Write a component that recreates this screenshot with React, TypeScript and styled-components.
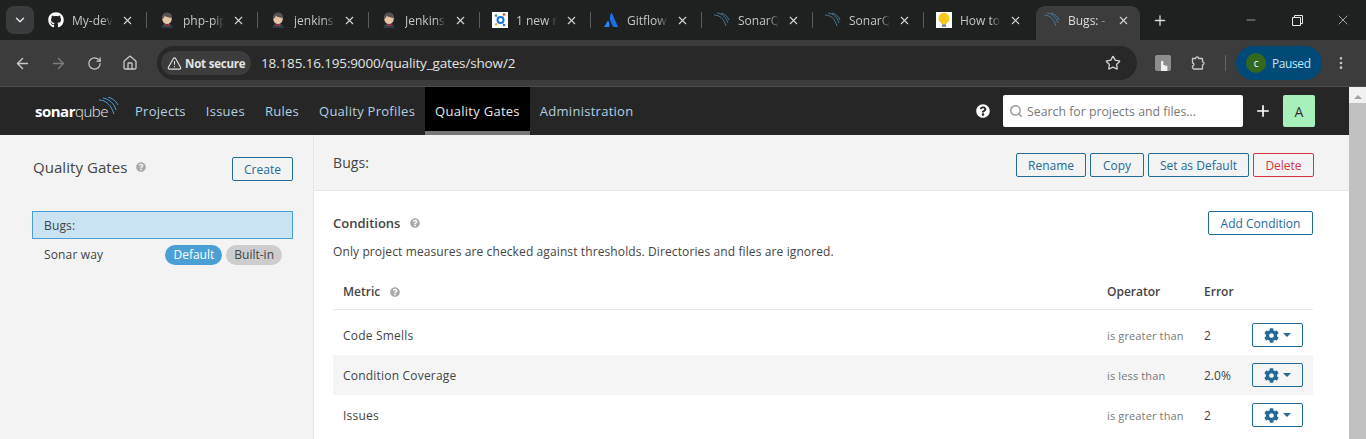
import React from 'react';
import styled, { createGlobalStyle } from 'styled-components';
import { FaGithub, FaCog, FaQuestionCircle } from 'react-icons/fa';
import { ArrowLeft, ArrowRight, RotateCw, Home, TriangleAlert, Star, X, Plus, ChevronDown, Minus, MoreVertical, Search } from 'lucide-react';

const Global = createGlobalStyle`
  html, body { margin: 0; padding: 0; height: 439px; overflow: hidden; background: #fff; }
  * { box-sizing: border-box; }
  body { font-family: "Open Sans", "Noto Sans", sans-serif; color: #444; }
`;

const Page = styled.div`width: 1366px; height: 439px; overflow: hidden; display: flex; flex-direction: column;`;

const TabStrip = styled.div`height: 40px; background: #1f2120; display: flex; align-items: flex-end; padding-left: 6px; flex: none;`;
const TabMenu = styled.div`width: 28px; height: 28px; border-radius: 8px; background: #3a3b3c; display: flex; align-items: center; justify-content: center; color: #e3e3e3; margin: 0 2px 6px 0;`;
const Tab = styled.div<{ $active?: boolean; $sep?: boolean }>`
  width: 111px; height: 34px; padding: 0 0 6px ${p => (p.$active ? 8 : 12)}px;
  display: flex; align-items: center; gap: 8px; position: relative; flex: none;
  font-family: "Open Sans", sans-serif; font-size: 12px; color: #c4c7c5;
  ${p => p.$active ? `
    background: #3c3c3c; border-radius: 9px 9px 0 0; width: 104px; margin-left: 1px; color: #dcdcdc;
  ` : ''}
  ${p => p.$sep ? `&::after { content: ''; position: absolute; right: 0; top: 6px; width: 1px; height: 16px; background: #5a5c5b; }` : ''}
`;
const Favicon = styled.span`width: 16px; height: 16px; flex: none; display: flex; align-items: center; justify-content: center; color: #fff;`;
const TabTitle = styled.span`
  width: 41px; flex: none; white-space: nowrap;
  -webkit-mask-image: linear-gradient(90deg, #000 75%, transparent);
  mask-image: linear-gradient(90deg, #000 75%, transparent);
`;
const TabClose = styled.span`display: flex; color: #d6d6d6; flex: none;`;
const NewTab = styled.div`margin: 0 0 6px 12px; color: #d8d8d8; display: flex; width: 16px; height: 28px; align-items: center;`;
const WinControls = styled.div`margin-left: auto; display: flex; align-self: stretch; color: #e6e6e6;`;
const WinBtn = styled.div`width: 46px; height: 40px; display: flex; align-items: center; justify-content: center;`;

const Toolbar = styled.div`height: 47px; background: #3c3c3c; border-bottom: 1px solid #4d4d4d; display: flex; align-items: center; padding: 0 0 0 13px; flex: none; color: #c7c7c7;`;
const ToolIcon = styled.span<{ $dim?: boolean }>`width: 18px; margin-right: 18px; display: flex; justify-content: center; color: ${p => (p.$dim ? '#7b7b7b' : '#c7c7c7')};`;
const Omnibox = styled.div`width: 980px; height: 34px; border-radius: 17px; background: #282828; display: flex; align-items: center; padding: 0 16px 0 4px;`;
const SecurityChip = styled.div`height: 24px; width: 90px; border-radius: 12px; background: #3c3c3c; color: #e3e3e3; font-size: 11.5px; font-weight: 700; display: flex; align-items: center; gap: 3px; padding-left: 6px; letter-spacing: -0.2px;`;
const Url = styled.div`margin-left: 10px; color: #e3e3e3; font-size: 13.5px; letter-spacing: -0.15px; flex: 1;`;
const ExtIcon = styled.div`width: 16px; height: 16px; margin-left: 18px; background: #8d8d8d; border-radius: 2px; display: flex; align-items: flex-end; justify-content: center; overflow: hidden;`;
const PuzzleWrap = styled.span`margin-left: 20px; display: flex;`;
const ToolSep = styled.span`width: 1px; height: 16px; background: #666; margin: 0 10px 0 18px;`;
const Profile = styled.div`width: 86px; height: 34px; border-radius: 17px; background: #004a77; color: #c2e7ff; font-size: 12px; letter-spacing: -0.4px; display: flex; align-items: center; gap: 6px; padding-left: 10px;`;
const Avatar = styled.span`width: 20px; height: 20px; border-radius: 50%; background: #33691e; color: #fff; font-size: 10px; display: flex; align-items: center; justify-content: center;`;
const MoreWrap = styled.span`margin-left: 11px; display: flex; color: #c7c7c7;`;

const Viewport = styled.div`flex: 1; display: flex; min-height: 0;`;
const Content = styled.div`flex: 1; min-width: 0; display: flex; flex-direction: column;`;
const Scrollbar = styled.div`width: 17px; background: #f1f1f1; flex: none; display: flex; flex-direction: column; align-items: center; padding-top: 8px;`;
const ScrollUp = styled.div`width: 0; height: 0; border-left: 4px solid transparent; border-right: 4px solid transparent; border-bottom: 4px solid #a3a3a3;`;
const ScrollThumb = styled.div`width: 100%; flex: 1; margin-top: 4px; background: #c1c1c1;`;

const Nav = styled.nav`height: 48px; background: #262626; display: flex; align-items: stretch; padding-left: 35px; flex: none;`;
const Logo = styled.div`width: 90px; position: relative; display: flex; align-items: center; color: #fff; font-size: 15px; letter-spacing: -0.5px;`;
const LogoBold = styled.b`font-weight: 700;`;
const LogoLight = styled.span`font-weight: 300; color: #e8e8e8;`;
const LogoArc = styled.svg`position: absolute; left: 62px; top: 10px;`;
const NavItem = styled.div<{ $active?: boolean }>`
  padding: 0 10px; display: flex; align-items: center; font-size: 13px; color: ${p => (p.$active ? '#e8e8e8' : '#b5d0e3')};
  letter-spacing: 0.27px;
  ${p => p.$active ? 'background: #000; border-bottom: 4px solid #777; padding-top: 4px;' : ''}
`;
const NavRight = styled.div`margin-left: auto; display: flex; align-items: center; padding-right: 34px; color: #fff;`;
const SearchBox = styled.div`width: 240px; height: 32px; margin-left: 13px; background: #fff; border-radius: 2px; display: flex; align-items: center; gap: 4px; padding-left: 6px; color: #777; font-size: 12.3px;`;
const PlusWrap = styled.span`margin: 0 11px; display: flex;`;
const UserBox = styled.div`width: 32px; height: 32px; background: #a8f0bb; color: #333; display: flex; align-items: center; justify-content: center; font-size: 14px; border-radius: 2px;`;

const Body = styled.div`flex: 1; display: flex; min-height: 0;`;
const Side = styled.aside`width: 314px; flex: none; background: #f3f3f3; border-right: 1px solid #e6e6e6; padding: 22px 20px 0 32px;`;
const SideHead = styled.div`display: flex; align-items: center; justify-content: space-between; height: 24px; padding-left: 1px;`;
const SideTitle = styled.div`font-size: 15px; letter-spacing: 0.05px; color: #444; display: flex; align-items: center; gap: 9px; margin-top: -5px;`;
const HelpDot = styled.span`display: inline-flex; color: #aaa;`;
const Btn = styled.button<{ $danger?: boolean; $w: number }>`
  width: ${p => p.$w}px; height: 24px; padding: 0; background: transparent; border-radius: 2px; font: 12px "Open Sans", sans-serif; flex: none;
  border: 1px solid ${p => (p.$danger ? '#d4333f' : '#236a97')};
  color: ${p => (p.$danger ? '#d4333f' : '#236a97')};
  display: inline-flex; align-items: center; justify-content: center;
`;
const GateList = styled.div`margin-top: 30px;`;
const GateRow = styled.div<{ $sel?: boolean }>`
  display: flex; align-items: center; justify-content: space-between; font-size: 12px; letter-spacing: 0.15px; color: #444;
  padding: 0 11px 0 12px; height: ${p => (p.$sel ? 28 : 31)}px;
  ${p => p.$sel ? 'background: #cae3f2; border: 1px solid #4b9fd5; padding-left: 11px;' : ''}
`;
const Badges = styled.div`display: flex; gap: 4px;`;
const Badge = styled.span<{ $blue?: boolean }>`
  height: 20px; padding: 0 8px; border-radius: 10px; display: flex; align-items: center; font-size: 12px; letter-spacing: 0;
  background: ${p => (p.$blue ? '#4b9fd5' : '#cdcdcd')}; color: ${p => (p.$blue ? '#fff' : '#444')};
`;
const Main = styled.main`flex: 1; min-width: 0; display: flex; flex-direction: column;`;
const MainHead = styled.div`height: 56px; background: #f3f3f3; border-bottom: 1px solid #e6e6e6; display: flex; align-items: center; padding: 5px 35px 0 19px; gap: 4px; flex: none;`;
const MainTitle = styled.div`font-size: 14px; letter-spacing: 0.1px; color: #444; margin-right: auto; margin-top: -5px;`;
const Section = styled.section`padding: 20px 36px 0 19px;`;
const CondHead = styled.div`display: flex; align-items: center; justify-content: space-between; height: 24px;`;
const CondTitle = styled.div`font-size: 13px; font-weight: 600; color: #444; display: flex; align-items: center; gap: 10px;`;
const Note = styled.div`font-size: 12px; letter-spacing: 0.11px; color: #444; margin-top: 7px; line-height: 20px;`;
const Table = styled.div`margin-top: 13px;`;
const RowGrid = styled.div<{ $alt?: boolean }>`
  display: grid; grid-template-columns: 764px 97px 48px 61px; align-items: center; height: 40px; padding-left: 10px;
  background: ${p => (p.$alt ? '#f5f5f5' : 'transparent')}; font-size: 12px; color: #444;
`;
const HeadGrid = styled(RowGrid)`height: 35px; border-bottom: 1px solid #e6e6e6; font-weight: 600; margin-bottom: 5px; padding-bottom: 2px;`;
const HeadHelp = styled.span`display: inline-flex; margin-left: 10px; vertical-align: -1px; color: #aaa;`;
const MetricCell = styled.span`letter-spacing: 0.2px;`;
const OpCell = styled.span`font-size: 11px; letter-spacing: 0.14px; color: #777;`;
const GearBtn = styled.button`
  width: 51px; height: 24px; background: transparent; border: 1px solid #236a97; border-radius: 2px; color: #236a97;
  display: inline-flex; align-items: center; justify-content: center; gap: 4px; padding: 0; justify-self: start;
`;
const Caret = styled.span`width: 0; height: 0; border-left: 4px solid transparent; border-right: 4px solid transparent; border-top: 4px solid #236a97;`;

const Sonar = () => (
  <svg width="16" height="16" viewBox="0 0 16 16" fill="none" stroke="#4a7fa5" strokeWidth="0.9">
    <path d="M0 3c6 0 10 4 12 11" /><path d="M3 1c5 .5 9 4 11 10" /><path d="M7 1c4 1 7 4 8 7" />
  </svg>
);
const Jenkins = () => (
  <svg width="16" height="16" viewBox="0 0 16 16">
    <path d="M2.500 16c0-3.500 2-5 5.500-5s5.500 1.500 5.500 5z" fill="#2f3a4a" />
    <ellipse cx="8" cy="6.500" rx="4.800" ry="5.500" fill="#e6c3a4" />
    <path d="M3 7C2.600 3 5 .5 8 .5s5.400 2.200 5 5.500c-2.500-.2-5.500-1-7.200-2.300C5.300 5.300 4.500 6.500 3 7z" fill="#57524f" />
    <path d="M5.800 11.800l2.200 1.200 2.200-1.200v2.400l-2.200-.8-2.200.8z" fill="#c8322a" />
  </svg>
);
const Knime = () => (
  <svg width="16" height="16" viewBox="0 0 16 16">
    <rect width="16" height="16" fill="#fff" />
    <path d="M4 4l3 2M12 3l-2 3M4 12l3-2M12 13l-2-3" stroke="#b9c4d6" strokeWidth="1" />
    <circle cx="8.500" cy="8" r="3" fill="none" stroke="#1a73e8" strokeWidth="2" />
    <circle cx="4" cy="3.500" r="1.300" fill="#34a853" /><circle cx="12" cy="2.500" r="1.300" fill="#ea4335" />
    <circle cx="4" cy="12.500" r="1.300" fill="#fbbc04" /><circle cx="12" cy="13" r="1.300" fill="#1a73e8" />
  </svg>
);
const Atlassian = () => (
  <svg width="16" height="16" viewBox="0 0 16 16">
    <path d="M5 8.500 1 15h5c.9-2 .6-4.500-1-6.500z" fill="#2684ff" />
    <path d="M8.200 1C6.500 3.800 6.300 7 7.700 9.800L10.300 15H15L9 1.300c-.2-.4-.6-.4-.8-.3z" fill="#1c6fe8" />
  </svg>
);
const Bulb = () => (
  <svg width="16" height="16" viewBox="0 0 16 16">
    <rect width="16" height="16" fill="#fff" />
    <path d="M8 .8a5.400 5.400 0 0 0-3 9.900c.5.400.7 1 .7 1.500h4.600c0-.5.200-1.100.7-1.500A5.400 5.400 0 0 0 8 .8z" fill="#f7c81e" />
    <rect x="5.800" y="12.200" width="4.400" height="2.800" rx=".8" fill="#8a8a8a" />
  </svg>
);
const RestoreIcon = () => (
  <svg width="11" height="11" viewBox="0 0 11 11" fill="none" stroke="#e6e6e6"><path d="M.5 2.500h8v8h-8zM2.500 2.500v-2h8v8h-2" /></svg>
);
const ChromePuzzle = () => (
  <svg width="16" height="16" viewBox="0 0 16 16" fill="none" stroke="#c7c7c7" strokeWidth="1.300" strokeLinejoin="round">
    <path d="M1.500 3.500h3.200a1.500 1.500 0 0 1 3 0h3.800v3.300a1.500 1.500 0 0 1 0 3v4.200H2.700l-1.200-1.200V11a1.500 1.500 0 0 0 0-3z" />
  </svg>
);

const tabs: { icon: React.ReactNode; title: string }[] = [
  { icon: <FaGithub size={16} />, title: 'My-dev' },
  { icon: <Jenkins />, title: 'php-pip' },
  { icon: <Jenkins />, title: 'jenkins' },
  { icon: <Jenkins />, title: 'Jenkins' },
  { icon: <Knime />, title: '1 new n' },
  { icon: <Atlassian />, title: 'Gitflow' },
  { icon: <Sonar />, title: 'SonarQ' },
  { icon: <Sonar />, title: 'SonarQ' },
  { icon: <Bulb />, title: 'How to' },
];

const rows = [
  { m: 'Code Smells', o: 'is greater than', e: '2' },
  { m: 'Condition Coverage', o: 'is less than', e: '2.0%', alt: true },
  { m: 'Issues', o: 'is greater than', e: '2' },
];

export default function App() {
  return (
    <Page>
      <Global />
      <TabStrip>
        <TabMenu><ChevronDown size={14} strokeWidth={2.5} /></TabMenu>
        {tabs.map((t, i) => (
          <Tab key={i} $sep={i < 8}>
            <Favicon>{t.icon}</Favicon>
            <TabTitle>{t.title}</TabTitle>
            <TabClose><X size={13} strokeWidth={2} /></TabClose>
          </Tab>
        ))}
        <Tab $active>
          <Favicon><Sonar /></Favicon>
          <TabTitle>Bugs: -</TabTitle>
          <TabClose><X size={13} strokeWidth={2} /></TabClose>
        </Tab>
        <NewTab><Plus size={17} strokeWidth={2} /></NewTab>
        <WinControls>
          <WinBtn><Minus size={14} strokeWidth={1} /></WinBtn>
          <WinBtn><RestoreIcon /></WinBtn>
          <WinBtn><X size={16} strokeWidth={1} /></WinBtn>
        </WinControls>
      </TabStrip>
      <Toolbar>
        <ToolIcon><ArrowLeft size={17} /></ToolIcon>
        <ToolIcon $dim><ArrowRight size={17} /></ToolIcon>
        <ToolIcon><RotateCw size={15} /></ToolIcon>
        <ToolIcon><Home size={16} /></ToolIcon>
        <Omnibox>
          <SecurityChip><TriangleAlert size={15} strokeWidth={1.8} />Not secure</SecurityChip>
          <Url>18.185.16.195:9000/quality_gates/show/2</Url>
          <Star size={16} color="#d0d0d0" />
        </Omnibox>
        <ExtIcon><svg width="12" height="14" viewBox="0 0 12 14"><path d="M4 14V5a1.200 1.200 0 0 1 2.400 0v3l4 1v5z" fill="#f1f1f1" /></svg></ExtIcon>
        <PuzzleWrap><ChromePuzzle /></PuzzleWrap>
        <ToolSep />
        <Profile><Avatar>c</Avatar>Paused</Profile>
        <MoreWrap><MoreVertical size={16} /></MoreWrap>
      </Toolbar>
      <Viewport>
        <Content>
          <Nav>
            <Logo>
              <LogoBold>sonar</LogoBold><LogoLight>qube</LogoLight>
              <LogoArc width="22" height="20" viewBox="0 0 22 20" fill="none" stroke="#4b9fd5" strokeWidth="1">
                <path d="M2 3c7 0 12 5 15 14" /><path d="M6 1c6 1 11 5 13 12" /><path d="M11 0c4 1 8 4 10 8" />
              </LogoArc>
            </Logo>
            <NavItem>Projects</NavItem>
            <NavItem>Issues</NavItem>
            <NavItem>Rules</NavItem>
            <NavItem>Quality Profiles</NavItem>
            <NavItem $active>Quality Gates</NavItem>
            <NavItem>Administration</NavItem>
            <NavRight>
              <FaQuestionCircle size={14} />
              <SearchBox><Search size={14} color="#999" strokeWidth={2.5} />Search for projects and files...</SearchBox>
              <PlusWrap><Plus size={18} strokeWidth={2.2} /></PlusWrap>
              <UserBox>A</UserBox>
            </NavRight>
          </Nav>
          <Body>
            <Side>
              <SideHead>
                <SideTitle>Quality Gates <HelpDot><FaQuestionCircle size={10} /></HelpDot></SideTitle>
                <Btn $w={61}>Create</Btn>
              </SideHead>
              <GateList>
                <GateRow $sel>Bugs:</GateRow>
                <GateRow>
                  Sonar way
                  <Badges><Badge $blue>Default</Badge><Badge>Built-in</Badge></Badges>
                </GateRow>
              </GateList>
            </Side>
            <Main>
              <MainHead>
                <MainTitle>Bugs:</MainTitle>
                <Btn $w={70}>Rename</Btn>
                <Btn $w={54}>Copy</Btn>
                <Btn $w={101}>Set as Default</Btn>
                <Btn $w={61} $danger>Delete</Btn>
              </MainHead>
              <Section>
                <CondHead>
                  <CondTitle>Conditions <HelpDot><FaQuestionCircle size={10} /></HelpDot></CondTitle>
                  <Btn $w={105}>Add Condition</Btn>
                </CondHead>
                <Note>Only project measures are checked against thresholds. Directories and files are ignored.</Note>
                <Table>
                  <HeadGrid>
                    <span>Metric<HeadHelp><FaQuestionCircle size={10} /></HeadHelp></span>
                    <span>Operator</span>
                    <span>Error</span>
                    <span />
                  </HeadGrid>
                  {rows.map(r => (
                    <RowGrid key={r.m} $alt={r.alt}>
                      <MetricCell>{r.m}</MetricCell>
                      <OpCell>{r.o}</OpCell>
                      <span>{r.e}</span>
                      <GearBtn><FaCog size={15} /><Caret /></GearBtn>
                    </RowGrid>
                  ))}
                </Table>
              </Section>
            </Main>
          </Body>
        </Content>
        <Scrollbar><ScrollUp /><ScrollThumb /></Scrollbar>
      </Viewport>
    </Page>
  );
}
